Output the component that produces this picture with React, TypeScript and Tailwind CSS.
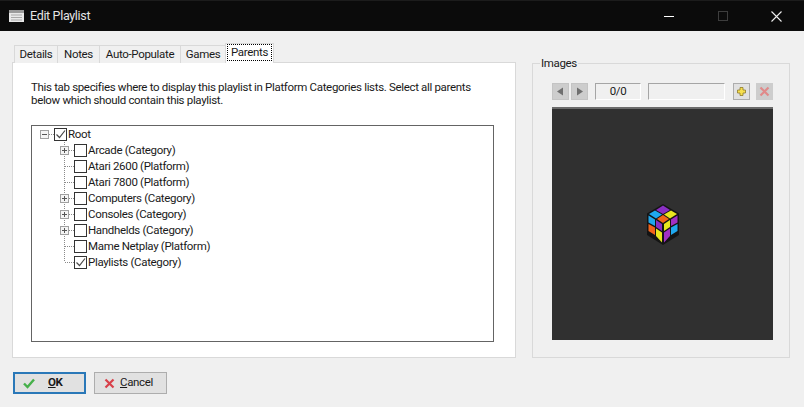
import React from 'react';

const tabs = [
  { label: 'Details', width: 'w-[44px]' },
  { label: 'Notes', width: 'w-[43px]' },
  { label: 'Auto-Populate', width: 'w-[82px]' },
  { label: 'Games', width: 'w-[46px]' },
];

const treeItems = [
  { label: 'Arcade (Category)', expander: true },
  { label: 'Atari 2600 (Platform)' },
  { label: 'Atari 7800 (Platform)' },
  { label: 'Computers (Category)', expander: true },
  { label: 'Consoles (Category)', expander: true },
  { label: 'Handhelds (Category)', expander: true },
  { label: 'Mame Netplay (Platform)' },
  { label: 'Playlists (Category)', checked: true, last: true },
];

const Checkbox = ({ checked }: { checked?: boolean }) => (
  <div className="w-[13px] h-[13px] border border-[#333] bg-white shrink-0">
    {checked && (
      <svg width="11" height="11" viewBox="0 0 11 11" className="block">
        <path d="M1.5 5.5 L4.5 8.5 L10 1.5" fill="none" stroke="#4a4a4a" strokeWidth="1.2" />
      </svg>
    )}
  </div>
);

const TreeLine = ({ last }: { last?: boolean }) => (
  <svg width="17" height="16" viewBox="0 0 17 16" className="block shrink-0">
    <path d={last ? 'M7.5 0V8' : 'M7.5 0V16'} stroke="#8a8a8a" strokeDasharray="1 1" />
    <path d="M8 8.5H17" stroke="#8a8a8a" strokeDasharray="1 1" />
  </svg>
);

const ExpanderBox = ({ open }: { open?: boolean }) => (
  <svg width="17" height="16" viewBox="0 0 17 16" className="block shrink-0">
    {!open && <path d="M7.5 0V16" stroke="#8a8a8a" strokeDasharray="1 1" />}
    <path d="M12 8.5H17" stroke="#8a8a8a" strokeDasharray="1 1" />
    <rect x="3.5" y="4.5" width="8" height="8" fill="#f4f4f4" stroke="#a0a0a0" />
    <path d="M5 8.5H10" stroke="#555" />
    {!open && <path d="M7.5 6V11" stroke="#555" />}
  </svg>
);

// isometric 2x2 cube, stickers listed per face
const CubeIcon = () => (
  <svg width="32" height="41" viewBox="0 0 32 41" className="block">
    <path d="M16 0 L32 9.5 V31 L16 41 L0 31 V9.5 Z" fill="#141414" />
    <path d="M16 1.5 L23 6 L16 10 L9 6 Z" fill="#8a2fc4" />
    <path d="M8 6.5 L15 10.5 L9 14.5 L2 10 Z" fill="#1fa8ee" />
    <path d="M24 6.5 L30 10 L23 14.5 L17 10.5 Z" fill="#e9e61e" />
    <path d="M16 11 L22 15 L16 19 L10 15 Z" fill="#f2641a" />
    <path d="M1.5 11.5 L8 15.5 V22 L1.5 18.5 Z" fill="#1fa8ee" />
    <path d="M9 16 L15 20 V27 L9 23 Z" fill="#8a2fc4" />
    <path d="M1.5 20 L8 23.5 V31 L1.5 27 Z" fill="#f2641a" />
    <path d="M9 24.5 L15 28.5 V38.5 L9 32 Z" fill="#e9e61e" />
    <path d="M17 20 L23 16 V23 L17 27 Z" fill="#e9e61e" />
    <path d="M24 15.5 L30.5 11.5 V18.5 L24 22 Z" fill="#a22fc4" />
    <path d="M17 28.5 L23 24.5 V32 L17 38.5 Z" fill="#a22fc4" />
    <path d="M24 23.5 L30.5 20 V27 L24 31 Z" fill="#1fa8ee" />
  </svg>
);

const NavButton = ({ flip }: { flip?: boolean }) => (
  <div className="w-[17px] h-[17px] bg-[#cdcdcd] border border-[#c4c4c4] flex items-center justify-center">
    <svg width="9" height="9" viewBox="0 0 9 9">
      <path d={flip ? 'M2 0.5 L8 4.5 L2 8.5 Z' : 'M7 0.5 L1 4.5 L7 8.5 Z'} fill="#6f6f6f" />
    </svg>
  </div>
);

export default function App() {
  return (
    <div className="w-[804px] h-[407px] bg-[#f0f0f0] flex flex-col overflow-hidden text-[11.5px] tracking-[-0.33px] text-[#1a1a1a] font-['Roboto',sans-serif] whitespace-nowrap">
      {/* Title bar */}
      <div className="h-[31px] shrink-0 bg-[#0b0b0b] border-t border-[#1c1c1c] flex items-center text-[#e4e4e4]">
        <svg width="15" height="12" viewBox="0 0 15 12" className="ml-[9px] mr-[6px]">
          <rect x="0" y="0" width="15" height="12" fill="#e8e8e8" />
          <rect x="0" y="0" width="15" height="3" fill="#9a9a9a" />
          <path d="M2 5H13M2 7.5H13M2 10H13" stroke="#a8a8a8" />
        </svg>
        <span className="text-[12.5px]">Edit Playlist</span>
        <div className="ml-auto flex items-center">
          <div className="w-[46px] flex justify-center">
            <div className="w-[10px] h-px bg-white" />
          </div>
          <div className="w-[46px] flex justify-center ml-[8px]">
            <div className="w-[10px] h-[10px] border border-[#3d3d3d]" />
          </div>
          <div className="w-[46px] flex justify-center ml-[7px] mr-[5px]">
            <svg width="11" height="11" viewBox="0 0 11 11">
              <path d="M0.5 0.5L10.5 10.5M10.5 0.5L0.5 10.5" stroke="#eee" strokeWidth="1.1" />
            </svg>
          </div>
        </div>
      </div>

      {/* Body */}
      <div className="flex-1 flex items-start pl-[12px] pr-[14px] pt-[13px] gap-[16px]">
        <div className="w-[504px] shrink-0">
          {/* Tabs */}
          <div className="flex items-end h-[19px] pl-[2px] relative z-10 -mb-px">
            {tabs.map((t, i) => (
              <div
                key={t.label}
                className={`h-[18px] pt-px flex items-center justify-center bg-[#f0f0f0] border border-[#d9d9d9] border-b-0 ${i > 0 ? '-ml-px' : ''} ${t.width}`}
              >
                {t.label}
              </div>
            ))}
            <div className="-ml-px w-[49px] h-[20px] bg-white border border-[#d9d9d9] border-b-0 flex items-center justify-center pb-[2px]">
              <span className="outline-1 outline-dotted outline-black px-[3px] leading-[15px]">Parents</span>
            </div>
          </div>
          <div className="h-[296px] bg-white border border-[#d9d9d9] pl-[18px] pr-[21px] pt-[18px]">
            <p className="leading-[13px]">
              This tab specifies where to display this playlist in Platform Categories lists. Select all parents
              <br />
              below which should contain this playlist.
            </p>
            {/* Tree */}
            <div className="mt-[18px] h-[217px] border border-[#646464] bg-white pl-[5px]">
              <div className="flex items-center h-[16px]">
                <ExpanderBox open />
                <Checkbox checked />
                <span className="ml-px pt-px">Root</span>
              </div>
              {treeItems.map((item) => (
                <div key={item.label} className="flex items-center h-[16px] pl-[20px]">
                  {item.expander ? <ExpanderBox /> : <TreeLine last={item.last} />}
                  <Checkbox checked={item.checked} />
                  <span className="ml-px pt-px">{item.label}</span>
                </div>
              ))}
            </div>
          </div>
        </div>

        {/* Images group */}
        <div className="w-[258px] shrink-0 relative mt-[19px] h-[295px] border border-[#d9d9d9] pl-[19px] pt-[19px]">
          <span className="absolute -top-[9px] left-[7px] px-[1px] bg-[#f0f0f0] leading-[16px]">Images</span>
          <div className="flex items-center h-[17px]">
            <NavButton />
            <div className="ml-[2px]"><NavButton flip /></div>
            <div className="ml-[7px] w-[46px] h-[17px] flex items-center justify-center border border-[#a5a5a5] border-r-white border-b-white">0/0</div>
            <div className="ml-[7px] w-[77px] h-[17px] border border-[#a5a5a5] border-r-white border-b-white" />
            <div className="ml-[8px] w-[17px] h-[17px] bg-[#e1e1e1] border border-[#adadad] flex items-center justify-center">
              <svg width="9" height="9" viewBox="0 0 9 9">
                <path d="M3 0.5H6V3H8.5V6H6V8.5H3V6H0.5V3H3Z" fill="#f7e04e" stroke="#8e7a2a" strokeWidth="0.8" />
              </svg>
            </div>
            <div className="ml-[6px] w-[17px] h-[17px] bg-[#cdcdcd] flex items-center justify-center">
              <svg width="11" height="11" viewBox="0 0 11 11">
                <path d="M1.5 1.5L9.5 9.5M9.5 1.5L1.5 9.5" stroke="#e08a8a" strokeWidth="2.2" />
              </svg>
            </div>
          </div>
          <div className="mt-[7px] w-[221px] h-[233px] bg-[#303030] border-t-2 border-t-[#6a6a6a] flex items-center justify-center">
            <CubeIcon />
          </div>
        </div>
      </div>

      {/* Footer buttons */}
      <div className="h-[35px] shrink-0 pl-[13px] flex items-start gap-[8px]">
        <button className="w-[73px] h-[22px] bg-[#e1e1e1] border-2 border-[#2a78b8] flex items-center pl-[8px]">
          <svg width="12" height="11" viewBox="0 0 12 11">
            <path d="M1 5.5 L4.5 9 L11 1.5" fill="none" stroke="#46b04a" strokeWidth="2.4" />
          </svg>
          <span className="ml-[13px] font-bold"><span className="underline">O</span>K</span>
        </button>
        <button className="w-[73px] h-[22px] bg-[#e1e1e1] border border-[#adadad] flex items-center pl-[9px]">
          <svg width="11" height="11" viewBox="0 0 11 11">
            <path d="M1.5 1.5L9.5 9.5M9.5 1.5L1.5 9.5" stroke="#d8404a" strokeWidth="2.2" />
          </svg>
          <span className="ml-[5px]"><span className="underline">C</span>ancel</span>
        </button>
      </div>
    </div>
  );
}
